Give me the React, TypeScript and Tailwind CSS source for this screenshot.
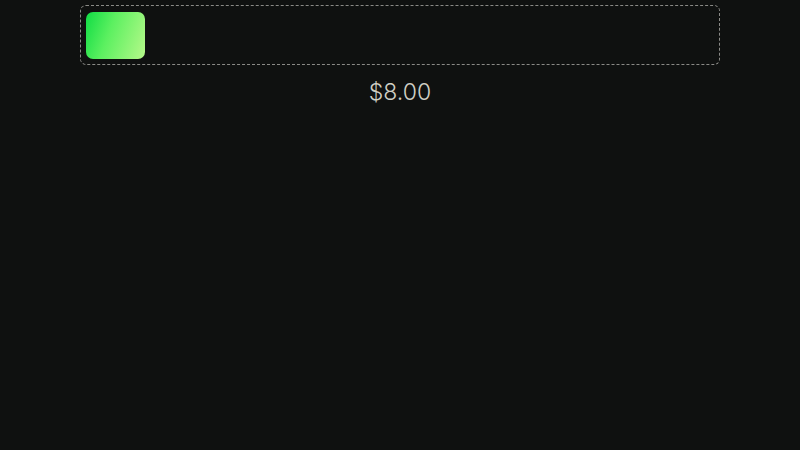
export default function App() {
  return (
    <div className="min-h-screen w-full bg-[#0f1110] pt-[5px]" style={{ fontFamily: '"Inter", "Liberation Sans", sans-serif' }}>
      <div className="mx-auto flex w-[640px] flex-col items-center gap-[16px]">
        <div className="flex h-[60px] w-full items-center rounded-[6px] border border-dashed border-[#8a8a86] px-[5px]">
          <div className="h-[47px] w-[59px] rounded-[7px] bg-[linear-gradient(110deg,#10dc44_0%,#5cf060_40%,#b6f98a_100%)]" />
        </div>
        <p className="text-[23px] font-light leading-none text-[#cfcfc4]">$8.00</p>
      </div>
    </div>
  );
}
